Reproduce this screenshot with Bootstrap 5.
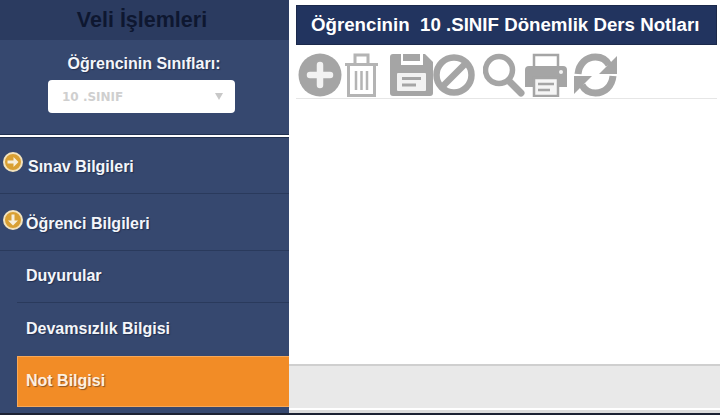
<!DOCTYPE html>
<html lang="tr">
<head>
<meta charset="UTF-8" />
<meta name="viewport" content="width=device-width, initial-scale=1" />
<title>Veli İşlemleri</title>
<link href="https://cdn.jsdelivr.net/npm/bootstrap@5.3.0/dist/css/bootstrap.min.css" rel="stylesheet" />
<style>
body {
  width: 720px;
  height: 415px;
  overflow: hidden;
  background: #fff;
  font-family: "Liberation Sans", Arial, sans-serif;
  font-weight: 700;
}
.page-wrap { height: 413px; }
.page-edge { height: 2px; background: #1c2233; }
.side-panel { width: 289px; background: #36486f; color: #f4f6fa; text-shadow: 1px 1px 1px rgba(10, 20, 45, .45); }
.side-head {
  height: 40px;
  background: #2b3b60;
  color: #0e1730;
  font-size: 21.5px;
  line-height: 40px;
  text-align: center;
  padding-right: 5px;
  text-shadow: none;
}
.class-box { height: 95px; padding-top: 15px; border-bottom: 1px solid #20304f; }
.class-label { font-size: 16px; line-height: 18px; text-align: center; padding-right: 1px; margin-bottom: 7px; }
.class-select {
  width: 187px;
  height: 33px;
  margin-left: 48px;
  background: #fff;
  border-radius: 4px;
  color: #cfcfcf;
  text-shadow: none;
  font-family: "DejaVu Sans", sans-serif;
  font-size: 12px;
  padding: 0 12px 0 14px;
}
.class-arrow { width: 0; height: 0; border-left: 4px solid transparent; border-right: 4px solid transparent; border-top: 7px solid #c8c8c8; }
.side-rule { height: 3px; background: #fff; border-bottom: 1px solid #20304f; }
.menu-top {
  height: 57px;
  font-size: 16px;
  border-bottom: 1px solid #2a3a5c;
  padding-left: 3px;
  padding-top: 3px;
  gap: 5px;
}
.menu-top.first-top { height: 56px; }
.menu-top.first-top svg { margin-top: -10px; }
.menu-top.open-top { gap: 3px; }
.menu-top.open-top svg { margin-top: -8px; }
.menu-sub {
  height: 52px;
  margin-left: 17px;
  padding-left: 9px;
  padding-bottom: 2px;
  font-size: 16px;
  border-bottom: 1px solid #2a3a5c;
}
.menu-sub.last-sub { border-bottom: 0; height: 53px; }
.menu-sub.now-open { background: #f28c26; border: 1px solid #f7a858; border-right: 0; padding-left: 8px; color: #fdf0e0; height: 51px; }
.main-panel { width: 431px; }
.title-bar {
  margin: 5px 3px 0 7px;
  height: 40px;
  background: #22345f;
  border: 1px solid #1b294b;
  color: #fff;
  font-size: 18.7px;
  line-height: 38px;
  padding-left: 14px;
  white-space: pre;
}
.tool-bar {
  margin: 7px 3px 0 7px;
  height: 47px;
  border-bottom: 1px solid #e6e6e6;
  padding: 1px 0 0 2px;
}
.tool-bar svg { display: block; flex: none; }
.tool-trash { margin-left: 3px; }
.tool-save { margin-left: 12px; }
.tool-search { margin-left: 8px; }
.tool-refresh { margin-left: 7px; }
.main-fill { height: 265px; }
.foot-bar { height: 44px; background: #e9e9e9; border-top: 2px solid #cfcfcf; }
.foot-line { height: 3px; margin-top: 2px; background: #dcdcdc; }
</style>
</head>
<body>
<div class="page-wrap d-flex">
  <div class="side-panel">
    <div class="side-head">Veli İşlemleri</div>
    <div class="class-box">
      <div class="class-label">Öğrencinin Sınıfları:</div>
      <div class="class-select d-flex align-items-center justify-content-between">
        <span>10 .SINIF</span><span class="class-arrow"></span>
      </div>
    </div>
    <div class="side-rule"></div>
    <div class="menu-top first-top d-flex align-items-center">
      <svg width="20" height="20" viewBox="0 0 20 20"><circle cx="10" cy="10" r="9" fill="#d9a033" stroke="#f3e3bd" stroke-width="2"/><path d="M4.5 8.5h6V5l5 5-5 5v-3.5h-6z" fill="#f7efdc"/></svg>
      <span>Sınav Bilgileri</span>
    </div>
    <div class="menu-top open-top d-flex align-items-center">
      <svg width="20" height="20" viewBox="0 0 20 20"><circle cx="10" cy="10" r="9" fill="#d9a033" stroke="#f3e3bd" stroke-width="2"/><path d="M8.5 4.5v6H5l5 5 5-5h-3.5v-6z" fill="#f7efdc"/></svg>
      <span>Öğrenci Bilgileri</span>
    </div>
    <div class="menu-sub d-flex align-items-center">Duyurular</div>
    <div class="menu-sub last-sub d-flex align-items-center">Devamsızlık Bilgisi</div>
    <div class="menu-sub now-open d-flex align-items-center">Not Bilgisi</div>
  </div>
  <div class="main-panel">
    <div class="title-bar">Öğrencinin  10 .SINIF Dönemlik Ders Notları</div>
    <div class="tool-bar d-flex align-items-start">
      <svg width="44" height="44" viewBox="0 0 44 44"><circle cx="22" cy="22" r="21.5" fill="#a5a5a5"/><path d="M22 12v20M12 22h20" stroke="#f2f2f2" stroke-width="6.5" stroke-linecap="round"/></svg>
      <svg class="tool-trash" width="33" height="44" viewBox="0 0 33 44" fill="none" stroke="#b4b4b4"><path d="M0 11.5h33M10 10V2h13v8" stroke-width="3"/><path d="M3.5 12v30.5h26V12" stroke-width="3"/><path d="M11 18v19M16.5 18v19M22 18v19" stroke-width="2.5"/></svg>
      <svg class="tool-save" width="43" height="44" viewBox="0 0 43 44"><path d="M0 4a3 3 0 0 1 3-3h32l8 8v31a3 3 0 0 1-3 3H3a3 3 0 0 1-3-3z" fill="#a5a5a5"/><rect x="11" y="1" width="22" height="11" fill="#fff"/><rect x="13" y="1" width="17" height="7" fill="#a5a5a5"/><rect x="7" y="20" width="29" height="18" rx="1" fill="#f2f2f2"/><path d="M12 25.5h19M12 32h14" stroke="#a5a5a5" stroke-width="3"/></svg>
      <svg width="42" height="44" viewBox="0 0 42 44" fill="none" stroke="#a5a5a5" stroke-width="6.5"><circle cx="21" cy="22" r="17.5"/><path d="M9 34L33 10"/></svg>
      <svg class="tool-search" width="42" height="45" viewBox="0 0 42 45" fill="none" stroke="#a5a5a5"><circle cx="16" cy="17" r="13.5" stroke-width="5.5"/><path d="M26 28l12 12" stroke-width="7" stroke-linecap="round"/></svg>
      <svg width="42" height="44" viewBox="0 0 42 44"><path d="M9 14V2h24v12" fill="none" stroke="#a5a5a5" stroke-width="2.5"/><path d="M0 17a4 4 0 0 1 4-4h34a4 4 0 0 1 4 4v17H0z" fill="#a5a5a5"/><rect x="9" y="25" width="24" height="18" fill="#f5f5f5" stroke="#a5a5a5" stroke-width="2.5"/><path d="M13 31h16M13 37h12" stroke="#a5a5a5" stroke-width="2.5"/><circle cx="36" cy="19" r="2" fill="#f2f2f2"/></svg>
      <svg class="tool-refresh" width="43" height="44" viewBox="0 0 43 44" fill="none"><path d="M4 21C5 11 12 4 21.5 4c6 0 11 3 13.500 8" stroke="#a5a5a5" stroke-width="7"/><path d="M43 3v18H25z" fill="#a5a5a5"/><path d="M39 23c-1 10-8 17-17.500 17-6 0-11-3-13.500-8" stroke="#a5a5a5" stroke-width="7"/><path d="M0 41V23h18z" fill="#a5a5a5"/></svg>
    </div>
    <div class="main-fill"></div>
    <div class="foot-bar"></div>
    <div class="foot-line"></div>
  </div>
</div>
<div class="page-edge"></div>
<script src="https://cdn.jsdelivr.net/npm/bootstrap@5.3.0/dist/js/bootstrap.bundle.min.js"></script>
</body>
</html>
